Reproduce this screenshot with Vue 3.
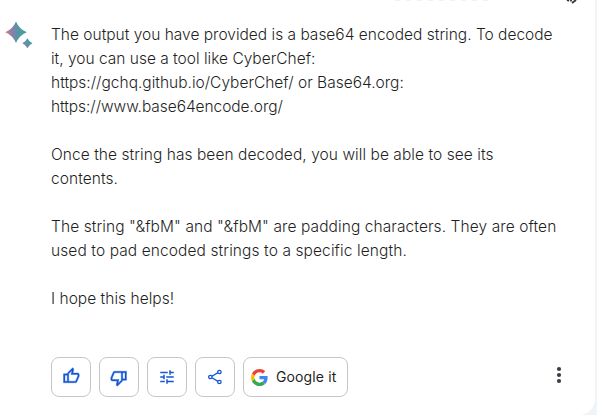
<script setup>
const paragraphs = [
  [
    { text: 'The output you have provided is a base64 encoded string. To decode', fit: 'l1' },
    { text: 'it, you can use a tool like CyberChef:', fit: 'l2' },
    { text: 'https://gchq.github.io/CyberChef/ or Base64.org:', fit: 'l3' },
    { text: 'https://www.base64encode.org/', fit: 'l4' },
  ],
  [
    { text: 'Once the string has been decoded, you will be able to see its', fit: 'l5' },
    { text: 'contents.', fit: 'l6' },
  ],
  [
    { text: 'The string "&fbM" and "&fbM" are padding characters. They are often', fit: 'l7' },
    { text: 'used to pad encoded strings to a specific length.', fit: 'l8' },
  ],
  [{ text: 'I hope this helps!', fit: 'l9' }],
]
const actions = [
  { name: 'up', size: 18, d: 'M21 8h-6.310l.95-4.570.03-.32c0-.41-.17-.79-.44-1.060L14.170 1 7.580 7.590C7.220 7.950 7 8.450 7 9v0H2v12h16c.83 0 1.540-.5 1.840-1.220l3.020-7.050c.09-.23.14-.47.14-.73v-2c0-1.100-.9-2-2-2zM7 19H4v-8h3v8zm14-7l-3 7H9V9l4.340-4.340L12 10h9v2z' },
  { name: 'down', size: 18, d: 'M3 16h6.310l-.95 4.570-.03.32c0 .41.17.79.44 1.060L9.830 23l6.590-6.590c.36-.36.58-.86.58-1.410h5V3H6c-.83 0-1.540.5-1.840 1.220l-3.020 7.050c-.09.23-.14.47-.14.73v2c0 1.100.9 2 2 2zM17 5h3v8h-3V5zM3 12l3-7h9v10l-4.340 4.340L12 14H3v-2z' },
  { name: 'tune', size: 18, d: 'M3 17v2h6v-2H3zM3 5v2h10V5H3zm10 16v-2h8v-2h-8v-2h-2v6h2zM7 9v2H3v2h4v2h2V9H7zm14 4v-2H11v2h10zm-6-4h2V7h4V5h-4V3h-2v6z' },
]
</script>

<template>
  <main class="card">
    <div class="cut">
      <span class="ghost"></span>
      <svg class="pen" width="14" height="4" viewBox="0 0 14 4"><path d="M2 0l2 1M6 0v1.500M7 3l4-3" fill="none" stroke="#33363b" stroke-width="1.800" /></svg>
    </div>
    <section class="response">
      <svg class="spark" width="30" height="30" viewBox="0 0.8 30 30">
        <defs>
          <linearGradient id="sparkFill" x1="0" y1="0" x2="1" y2="0">
            <stop offset="0" stop-color="#e8814f" />
            <stop offset=".25" stop-color="#9a7bab" />
            <stop offset=".55" stop-color="#5d91a6" />
            <stop offset=".75" stop-color="#45a29c" />
            <stop offset="1" stop-color="#5193a3" />
          </linearGradient>
          <linearGradient id="smallFill" x1="0" y1="1" x2="1" y2="0">
            <stop offset=".2" stop-color="#8b7fae" />
            <stop offset=".65" stop-color="#449f9c" />
          </linearGradient>
        </defs>
        <path d="M11 -0.800Q14.200 6.800 21.800 10Q14.200 13.200 11 20.800Q7.800 13.200 0.200 10Q7.800 6.800 11 -0.800Z" fill="url(#sparkFill)" />
        <path d="M22.400 16Q24 19.400 27.400 21Q24 22.600 22.400 26Q20.800 22.600 17.400 21Q20.800 19.400 22.400 16Z" fill="url(#smallFill)" />
      </svg>
      <div class="copy">
        <p v-for="(lines, i) in paragraphs" :key="i">
          <span v-for="line in lines" :key="line.text" class="line" :class="line.fit">{{ line.text }}</span>
        </p>
      </div>
    </section>
    <footer class="actions">
      <button v-for="a in actions" :key="a.name" class="btn" :class="a.name">
        <svg :width="a.size" :height="a.size" viewBox="0 0 24 24"><path :d="a.d" /></svg>
      </button>
      <button class="btn">
        <svg width="16" height="16" viewBox="0 0 16 16" fill="none" stroke="#1456d3" stroke-width="1.300">
          <path class="links" d="M5 7.200L11 3.600M5 8.800l6 3.600" />
          <circle cx="3.400" cy="8" r="1.700" /><circle cx="12.400" cy="3" r="1.700" /><circle cx="12.400" cy="13" r="1.700" />
        </svg>
      </button>
      <button class="btn google">
        <svg width="17" height="17" viewBox="0 0 48 48">
          <path fill="#EA4335" d="M24 9.500c3.540 0 6.710 1.220 9.210 3.600l6.850-6.850C35.900 2.380 30.470 0 24 0 14.620 0 6.510 5.380 2.560 13.220l7.980 6.190C12.430 13.720 17.740 9.500 24 9.500z" />
          <path fill="#4285F4" d="M46.980 24.550c0-1.570-.15-3.090-.38-4.550H24v9.020h12.940c-.58 2.960-2.260 5.480-4.780 7.180l7.730 6c4.510-4.180 7.090-10.360 7.090-17.650z" />
          <path fill="#FBBC05" d="M10.530 28.590c-.48-1.450-.76-2.990-.76-4.590s.27-3.140.76-4.590l-7.980-6.190C.92 16.460 0 20.120 0 24s.92 7.540 2.560 10.780l7.970-6.190z" />
          <path fill="#34A853" d="M24 48c6.480 0 11.930-2.130 15.890-5.810l-7.730-6c-2.150 1.450-4.920 2.300-8.160 2.300-6.260 0-11.570-4.220-13.470-9.910l-7.980 6.190C6.510 42.620 14.620 48 24 48z" />
        </svg>
        <span>Google it</span>
      </button>
      <svg class="more" width="6" height="18" viewBox="0 0 6 18" fill="#3c3d43"><circle cx="3" cy="3" r="2.100" /><circle cx="3" cy="9" r="2.100" /><circle cx="3" cy="15" r="2.100" /></svg>
    </footer>
  </main>
</template>

<style>
body { background: #f0f4f9; overflow: hidden; }
</style>
<style scoped>
.card { box-sizing: border-box; width: 595px; height: 415px; background: #fff; border-radius: 0 0 16px 0; font-family: Inter, "Liberation Sans", sans-serif; color: #1f1f1f; }
.cut { display: flex; height: 23px; align-items: flex-start; }
.ghost { width: 96px; height: 1px; margin-left: 395px; background: repeating-linear-gradient(90deg, #f2f2f2 0 5px, #fff 5px 11px); }
.pen { margin-left: 74px; }
.response { display: flex; height: 334px; }
.spark { margin-left: 5px; flex: none; overflow: visible; }
.copy { margin-left: 16px; font-size: 15.500px; font-weight: 300; line-height: 24px; }
p { margin: 0 0 24px; }
.line { display: block; width: max-content; white-space: nowrap; }
.l4 { letter-spacing: -0.06px; }
.l5 { letter-spacing: 0.06px; }
.l6 { letter-spacing: 0.06px; }
.l7 { letter-spacing: 0.085px; }
.l8 { letter-spacing: 0.1px; }
.l9 { letter-spacing: 0.03px; }
.actions { display: flex; align-items: center; gap: 8px; margin-left: 51px; height: 40px; }
.btn { box-sizing: border-box; width: 40px; height: 40px; padding: 0; border: 1px solid #c4c7c5; border-radius: 8px; background: #fff; display: flex; align-items: center; justify-content: center; font-family: inherit; color: #1f1f1f; }
.up path, .down path, .tune path { fill: #1456d3; }
.up path, .down path { stroke: #1456d3; stroke-width: 0.5px; }
.up { padding-bottom: 2px; }
.down { padding-top: 2px; }
.google { width: 105px; justify-content: flex-start; padding-left: 7px; gap: 8px; font-size: 14px; letter-spacing: 0.12px; }
.google span { margin-top: -1px; }
.more { margin: -4px 0 0 200px; }
</style>
